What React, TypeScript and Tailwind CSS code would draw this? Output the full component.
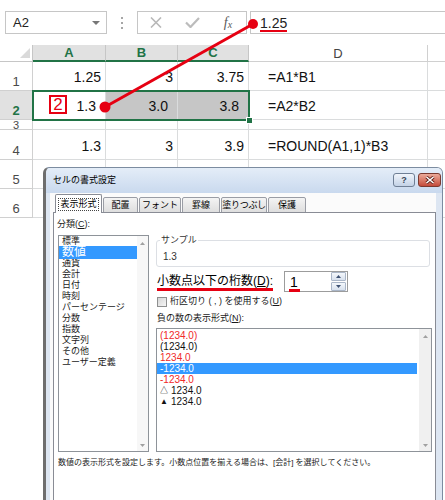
import React from 'react';

type Row = {
  label: string;
  a?: string;
  b?: string;
  c?: string;
  d?: string;
  sel?: boolean;
  short?: boolean;
};

const rows: Row[] = [
  { label: '1', a: '1.25', b: '3', c: '3.75', d: '=A1*B1' },
  { label: '2', a: '1.3', b: '3.0', c: '3.8', d: '=A2*B2', sel: true },
  { label: '3', short: true },
  { label: '4', a: '1.3', b: '3', c: '3.9', d: '=ROUND(A1,1)*B3' },
  { label: '5' },
  { label: '6' },
];

function TriUp() {
  return (
    <svg width="5" height="3" viewBox="0 0 5 3">
      <path d="M0 3 L2.5 0 L5 3Z" fill="#a0a0a0" />
    </svg>
  );
}
function TriDown() {
  return (
    <svg width="5" height="3" viewBox="0 0 5 3">
      <path d="M0 0 L5 0 L2.5 3Z" fill="#a0a0a0" />
    </svg>
  );
}

function SheetRow({ r }: { r: Row }) {
  const cell =
    'flex items-end justify-end border-b border-r border-[#dadcdd] pb-[5px] text-[14px] leading-[16px] text-[#111] overflow-hidden';
  const pr = r.sel ? 'pr-[9px]' : 'pr-[4px]';
  return (
    <>
      <div
        className={`flex justify-center overflow-hidden border-b border-r border-[#d0d0d0] ${
          r.short ? 'items-center text-[11px] leading-[10px]' : 'items-end text-[13px] leading-[16px]'
        } ${r.sel ? 'bg-[#e1e1e1] font-bold text-[#217346]' : 'bg-white text-[#4a4a4a]'}`}
      >
        {r.label}
      </div>
      <div className={`${cell} ${pr}`}>{r.a}</div>
      <div className={`${cell} ${pr} ${r.sel ? 'bg-[#c6c6c6]' : ''}`}>{r.b}</div>
      <div className={`${cell} ${pr} ${r.sel ? 'bg-[#c6c6c6]' : ''}`}>{r.c}</div>
      <div className="flex items-end justify-start overflow-hidden border-b border-r border-[#dadcdd] pb-[5px] pl-[19px] text-[14px] leading-[16px] text-[#111]">
        {r.d}
      </div>
      <div className="border-b border-[#dadcdd]" />
    </>
  );
}

const tabCls =
  'flex h-[16px] items-center justify-center whitespace-nowrap rounded-t-[2px] border border-[#9a9da5] bg-gradient-to-b from-[#f4f4f4] to-[#dedede]';

export default function App() {
  return (
    <div className="relative h-[500px] w-[445px] overflow-hidden bg-white font-['Liberation_Sans','Noto_Sans_CJK_JP',sans-serif]">
      {/* Formula bar */}
      <div className="flex h-[45px] pl-[5px] pt-[11px]">
        <div className="flex h-[23px] w-[102px] items-center justify-between border border-[#c6c6c6] pl-[7px] pr-[6px]">
          <span className="text-[13px] leading-none text-[#222]">A2</span>
          <svg width="8" height="4" viewBox="0 0 8 4">
            <path d="M0 0H8L4 4Z" fill="#777" />
          </svg>
        </div>
        <div className="flex h-[23px] w-[30px] flex-col items-center justify-center gap-[3px]">
          <span className="h-[2px] w-[2px] bg-[#a6a6a6]" />
          <span className="h-[2px] w-[2px] bg-[#a6a6a6]" />
          <span className="h-[2px] w-[2px] bg-[#a6a6a6]" />
        </div>
        <div className="flex h-[23px] w-[110px] items-center border border-[#c6c6c6]">
          <div className="flex w-[36px] justify-center">
            <svg width="12" height="11" viewBox="0 0 12 11">
              <path d="M1 0.5 L11 10.5 M11 0.5 L1 10.5" stroke="#b8b8b8" strokeWidth="1.6" />
            </svg>
          </div>
          <div className="flex w-[36px] justify-center">
            <svg width="15" height="11" viewBox="0 0 15 11">
              <path d="M1 5.5 L5.5 10 L14 1" stroke="#bcbcbc" strokeWidth="2.2" fill="none" />
            </svg>
          </div>
          <div className="flex w-[36px] items-end justify-center font-['Liberation_Serif',serif] italic text-[#5a5a5a]">
            <span className="text-[14px] leading-[14px]">f</span>
            <span className="text-[10px] leading-[10px]">x</span>
          </div>
        </div>
        <div className="ml-[3px] flex h-[23px] flex-1 items-center border border-r-0 border-[#c6c6c6] pl-[9px]">
          <span className="mt-[3px] inline-block border-b-2 border-[#e60012] text-[14px] leading-[14px] text-[#222]">
            1.25
          </span>
        </div>
      </div>

      {/* Sheet grid */}
      <div className="grid grid-cols-[33px_73px_72px_71px_179px_1fr] grid-rows-[17px_29px_29px_10px_30px_29px_29px]">
        <div className="flex items-end justify-end border-b border-r border-[#c6c6c6] bg-white pb-[3px] pr-[2px]">
          <svg width="10" height="10" viewBox="0 0 10 10">
            <path d="M10 0 L10 10 L0 10Z" fill="#dadada" />
          </svg>
        </div>
        {['A', 'B', 'C'].map((l) => (
          <div
            key={l}
            className="flex items-center justify-center border-r border-[#c6c6c6] border-b-2 border-b-[#217346] bg-[#e1e1e1] text-[13px] font-bold leading-none text-[#217346]"
          >
            {l}
          </div>
        ))}
        <div className="flex items-center justify-center border-b border-r border-[#d0d0d0] bg-white text-[13px] leading-none text-[#444]">
          D
        </div>
        <div className="border-b border-[#d0d0d0]" />
        {rows.map((r) => (
          <SheetRow key={r.label} r={r} />
        ))}
      </div>

      {/* Selection outline */}
      <div className="absolute left-[32px] top-[90px] h-[31px] w-[218px] border-2 border-[#217346]" />
      <div className="absolute left-[246px] top-[117px] h-[7px] w-[7px] border border-white bg-[#217346]" />

      {/* Annotation "2" box */}
      <div className="absolute left-[49px] top-[95px] flex h-[19px] w-[18px] items-center justify-center border-2 border-[#e60012] bg-white text-[17px] leading-none text-[#e60012]">
        2
      </div>

      {/* Annotation line */}
      <svg className="pointer-events-none absolute left-0 top-0" width="445" height="500" viewBox="0 0 445 500">
        <line x1="105" y1="107" x2="253" y2="24" stroke="#e60012" strokeWidth="3" />
        <circle cx="105" cy="107" r="5.5" fill="#e60012" />
        <circle cx="253" cy="24" r="5" fill="#e60012" />
      </svg>

      {/* Dialog */}
      <div className="absolute left-[43px] top-[167px] flex h-[345px] w-[400px] flex-col rounded-t-[6px] border border-l-[3px] border-[#7c8ca0] border-l-[#6e6e6e] bg-[#dde6f2]">
        <div className="flex h-[25px] shrink-0 items-start justify-between rounded-t-[5px] bg-gradient-to-b from-[#e4edf8] to-[#c9d9ee] pl-[7px] pr-[1px]">
          <span className="mt-[7px] text-[9px] leading-[11px] text-black">セルの書式設定</span>
          <div className="mt-[5px] flex gap-[3px]">
            <div className="flex h-[14px] w-[22px] items-center justify-center rounded-[3px] border border-[#6f7f95] bg-gradient-to-b from-[#f1f5fb] to-[#c3d2e6] text-[9px] font-bold leading-none text-[#3a4658]">
              ?
            </div>
            <div className="flex h-[14px] w-[23px] items-center justify-center rounded-[3px] border border-[#7b3a30] bg-gradient-to-b from-[#ebaa9a] to-[#c44b3b]">
              <svg width="10" height="8" viewBox="0 0 10 8">
                <path d="M1.5 1 L8.5 7 M8.5 1 L1.5 7" stroke="#5a1e16" strokeWidth="3.2" />
                <path d="M1.5 1 L8.5 7 M8.5 1 L1.5 7" stroke="#ffffff" strokeWidth="1.6" />
              </svg>
            </div>
          </div>
        </div>

        <div className="ml-[4px] mr-[6px] flex flex-1 flex-col bg-[#fbfbfb]">
          {/* Tabs */}
          <div className="ml-[5px] mt-[1px] flex h-[19px] items-end gap-[1px] text-[9px] leading-none text-black">
            <div className="relative z-10 flex h-[19px] w-[47px] items-center justify-center whitespace-nowrap rounded-t-[2px] border border-b-0 border-[#898c95] bg-white">
              <span className="border border-dotted border-[#444] px-[1px] py-[1px]">表示形式</span>
            </div>
            <div className={`${tabCls} w-[35px]`}>配置</div>
            <div className={`${tabCls} w-[42px]`}>フォント</div>
            <div className={`${tabCls} w-[38px]`}>罫線</div>
            <div className={`${tabCls} w-[46px] tracking-[-0.3px]`}>塗りつぶし</div>
            <div className={`${tabCls} w-[38px]`}>保護</div>
          </div>

          {/* Panel */}
          <div className="-mt-px ml-[3px] flex flex-1 flex-col border border-[#898c95] bg-white text-[#1a1a1a]">
            <div className="flex pl-[3px] pt-[6px]">
              {/* Left column */}
              <div className="flex w-[92px] flex-col">
                <div className="h-[11px] text-[9px] leading-[11px]">
                  分類(<span className="underline">C</span>):
                </div>
                <div className="ml-[1px] mt-[5px] flex h-[217px] w-[91px] border border-[#8e9399] bg-white">
                  <div className="flex flex-1 flex-col text-[9px] leading-[11px]">
                    <div className="h-[11px] pl-[3px]">標準</div>
                    <div className="relative z-10 -mb-[1px] -mt-[1px] flex h-[13px] items-center bg-[#3399ff] pl-[3px] text-[12px] leading-[13px] text-white">
                      数値
                    </div>
                    <div className="h-[11px] pl-[3px]">通貨</div>
                    <div className="h-[11px] pl-[3px]">会計</div>
                    <div className="h-[11px] pl-[3px]">日付</div>
                    <div className="h-[11px] pl-[3px]">時刻</div>
                    <div className="h-[11px] pl-[3px]">パーセンテージ</div>
                    <div className="h-[11px] pl-[3px]">分数</div>
                    <div className="h-[11px] pl-[3px]">指数</div>
                    <div className="h-[11px] pl-[3px]">文字列</div>
                    <div className="h-[11px] pl-[3px]">その他</div>
                    <div className="h-[11px] pl-[3px]">ユーザー定義</div>
                  </div>
                  <div className="flex w-[11px] flex-col items-center justify-between bg-[#f7f7f7] pb-[4px] pt-[6px]">
                    <TriUp />
                    <TriDown />
                  </div>
                </div>
              </div>

              {/* Right column */}
              <div className="ml-[7px] flex w-[276px] flex-col">
                <fieldset className="mt-[16px] h-[32px] w-[274px] rounded-[3px] border border-[#dcdfe4] pl-[6px]">
                  <legend className="-ml-[3px] px-[1px] text-[9px] leading-[11px] text-[#333]">サンプル</legend>
                  <div className="mt-[5px] text-[10px] leading-[12px] text-[#333]">1.3</div>
                </fieldset>

                <div className="mt-[4px] flex h-[21px] items-end">
                  <div className="w-[128px] pl-[1px]">
                    <span className="inline-block border-b-[3px] border-[#e60012] text-[12px] leading-[13px] text-black">
                      小数点以下の桁数(<span className="underline">D</span>):
                    </span>
                  </div>
                  <div className="flex h-[21px] w-[64px] items-center border border-[#9c9c9c] bg-white pr-[1px]">
                    <div className="flex-1 pl-[4px]">
                      <span className="inline-block w-[11px] border-b-[3px] border-[#e60012] pl-[1px] text-[14px] leading-[14px] text-black">
                        1
                      </span>
                    </div>
                    <div className="flex flex-col gap-[1px]">
                      <div className="flex h-[9px] w-[15px] items-center justify-center rounded-[1px] border border-[#aab6c8] bg-gradient-to-b from-[#f4f7fb] to-[#d8e1ee]">
                        <svg width="5" height="3" viewBox="0 0 5 3">
                          <path d="M0 3 L2.5 0 L5 3Z" fill="#3d5173" />
                        </svg>
                      </div>
                      <div className="flex h-[9px] w-[15px] items-center justify-center rounded-[1px] border border-[#aab6c8] bg-gradient-to-b from-[#f4f7fb] to-[#d8e1ee]">
                        <svg width="5" height="3" viewBox="0 0 5 3">
                          <path d="M0 0 L5 0 L2.5 3Z" fill="#3d5173" />
                        </svg>
                      </div>
                    </div>
                  </div>
                </div>

                <div className="ml-[1px] mt-[4px] flex h-[11px] items-center">
                  <div className="h-[10px] w-[10px] border border-[#8e8f8f] bg-gradient-to-br from-[#d6d6d6] to-[#f6f6f6]" />
                  <span className="ml-[3px] text-[9px] leading-[11px]">
                    桁区切り ( , ) を使用する(<span className="underline">U</span>)
                  </span>
                </div>

                <div className="ml-[1px] mt-[6px] h-[11px] text-[9px] leading-[11px]">
                  負の数の表示形式(<span className="underline">N</span>):
                </div>

                <div className="mt-[4px] flex h-[124px] w-[276px] border border-[#8e9399] bg-white">
                  <div className="flex flex-1 flex-col pt-[1px] text-[10px] leading-[11px]">
                    <div className="h-[11px] pl-[3px] text-[#f02a2a]">(1234.0)</div>
                    <div className="h-[11px] pl-[3px] text-[#111]">(1234.0)</div>
                    <div className="h-[11px] pl-[3px] text-[#f02a2a]">1234.0</div>
                    <div className="mr-[2px] h-[11px] bg-[#3399ff] pl-[3px] text-white">-1234.0</div>
                    <div className="h-[11px] pl-[3px] text-[#f02a2a]">-1234.0</div>
                    <div className="flex h-[11px] items-center pl-[3px] text-[#111]">
                      <span className="w-[11px] text-[8px] leading-[11px]">△</span>1234.0
                    </div>
                    <div className="flex h-[11px] items-center pl-[3px] text-[#111]">
                      <span className="w-[11px] text-[8px] leading-[11px]">▲</span>1234.0
                    </div>
                  </div>
                  <div className="flex w-[12px] flex-col items-center justify-between bg-[#f0f0f0] pb-[4px] pt-[6px]">
                    <TriUp />
                    <TriDown />
                  </div>
                </div>
              </div>
            </div>

            <div className="mt-[6px] pl-[4px] text-[8px] leading-[10px] text-[#222]">
              数値の表示形式を設定します。小数点位置を揃える場合は、[会計] を選択してください。
            </div>
          </div>
        </div>
      </div>
    </div>
  );
}
